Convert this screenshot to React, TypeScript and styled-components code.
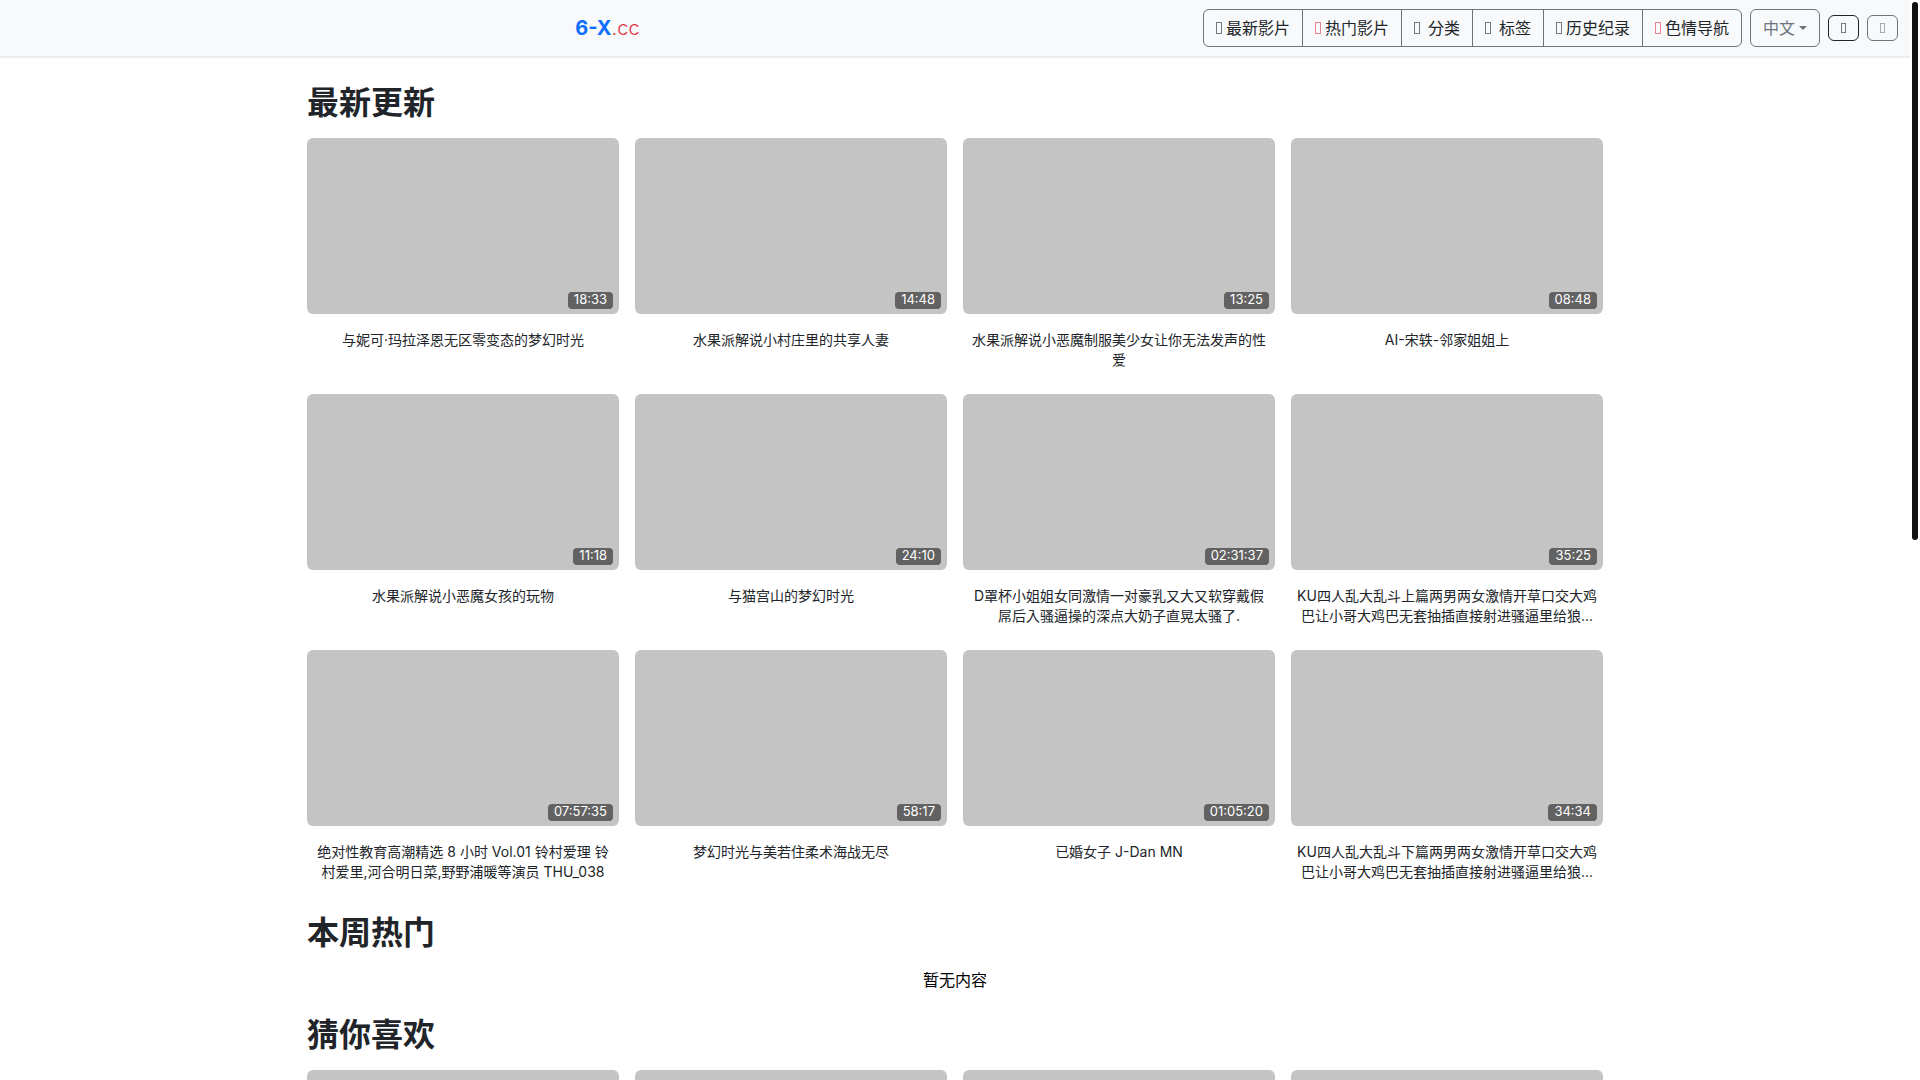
import React from 'react';
import styled, { createGlobalStyle } from 'styled-components';

const GlobalStyle = createGlobalStyle`
  *, *::before, *::after { box-sizing: border-box; }
  body {
    margin: 0;
    background: #fff;
    color: #212529;
    font-family: Inter, 'Noto Sans CJK JP', sans-serif;
    font-size: 16px;
    line-height: 24px;
  }
`;

const Shell = styled.div`
  display: grid;
  grid-template-columns: minmax(0, 1fr) 10px;
  height: 100vh;
`;

const Scroller = styled.div`
  overflow-y: auto;
  scrollbar-width: none;
`;

const Rail = styled.div`
  padding: 2px;
`;

const Thumb = styled.div`
  height: 50%;
  border-radius: 3px;
  background: #111;
`;

const Header = styled.header`
  display: flex;
  align-items: center;
  gap: 8px;
  padding: 9px 12px;
  background: #f8f9fa;
  border-bottom: 2px solid #ededed;
`;

const BrandArea = styled.div`
  flex: 1;
  margin-right: -8px;
  text-align: center;
`;

const Brand = styled.a`
  color: #dc3545;
  font-size: 20px;
  font-weight: 300;
  line-height: 30px;
  text-decoration: none;

  strong {
    color: #0d6efd;
    font-weight: 700;
  }
`;

const NavGroup = styled.nav`
  display: flex;
  border: 1px solid #6c757d;
  border-radius: 6px;
`;

const NavLink = styled.a<{ $wide?: boolean }>`
  display: flex;
  align-items: center;
  gap: ${(p) => (p.$wide ? 8 : 4)}px;
  padding: 6px 12px;
  color: #212529;
  text-decoration: none;
  white-space: nowrap;

  & + & {
    border-left: 1px solid #6c757d;
  }
`;

const LanguageBox = styled.label`
  display: flex;
  align-items: center;
  gap: 4px;
  padding: 6px 12px;
  border: 1px solid #6c757d;
  border-radius: 6px;
  color: #6c757d;
`;

const LanguageSelect = styled.select`
  appearance: none;
  width: 32px;
  padding: 0;
  border: 0;
  background: transparent;
  color: inherit;
  font: inherit;
`;

const IconButton = styled.button<{ $color: string }>`
  display: flex;
  align-items: center;
  justify-content: center;
  width: 31px;
  height: 26px;
  padding: 0;
  border: 1px solid ${(p) => p.$color};
  border-radius: 6px;
  background: transparent;
  color: ${(p) => p.$color};
`;

const Main = styled.main`
  display: flex;
  flex-direction: column;
  gap: 23px;
  max-width: 1320px;
  margin: 0 auto;
  padding: 25px 12px;
`;

const Heading = styled.h2`
  margin: 0 0 15px;
  font-size: 32px;
  font-weight: 700;
  line-height: 40px;
`;

const Grid = styled.div`
  display: grid;
  grid-template-columns: repeat(4, minmax(0, 1fr));
  gap: 16px;
`;

const Card = styled.a`
  display: block;
  color: inherit;
  text-decoration: none;
`;

const Poster = styled.div`
  position: relative;
  aspect-ratio: 39 / 22;
  border-radius: 6px;
  background: #c4c4c4;
`;

const Duration = styled.span`
  position: absolute;
  right: 6px;
  bottom: 5px;
  padding: 0 6px 2px;
  border-radius: 4px;
  background: rgba(0, 0, 0, 0.5);
  color: #fff;
  font-size: 13px;
  line-height: 15px;
`;

const Title = styled.div`
  display: -webkit-box;
  -webkit-box-orient: vertical;
  -webkit-line-clamp: 2;
  height: 40px;
  margin: 16px 4px 8px;
  overflow: hidden;
  font-size: 14px;
  line-height: 20px;
  text-align: center;
`;

const Empty = styled.p`
  margin: 0;
  color: #000;
  text-align: center;
`;

function Glyph({ color = '#212529', small = false }: { color?: string; small?: boolean }) {
  return (
    <svg width={small ? 5 : 6} height={small ? 10 : 12} aria-hidden="true">
      <rect
        x="0.5"
        y="0.5"
        width={small ? 4 : 5}
        height={small ? 9 : 11}
        fill="none"
        stroke={color}
        strokeOpacity="0.6"
      />
    </svg>
  );
}

const navItems = [
  { label: '最新影片' },
  { label: '热门影片', color: '#dc3545' },
  { label: '分类', wide: true },
  { label: '标签', wide: true },
  { label: '历史纪录' },
  { label: '色情导航', color: '#dc3545' },
];

const latest = [
  { time: '18:33', title: '与妮可·玛拉泽恩无区零变态的梦幻时光' },
  { time: '14:48', title: '水果派解说小村庄里的共享人妻' },
  { time: '13:25', title: '水果派解说小恶魔制服美少女让你无法发声的性爱' },
  { time: '08:48', title: 'AI-宋轶-邻家姐姐上' },
  { time: '11:18', title: '水果派解说小恶魔女孩的玩物' },
  { time: '24:10', title: '与猫宫山的梦幻时光' },
  { time: '02:31:37', title: 'D罩杯小姐姐女同激情一对豪乳又大又软穿戴假屌后入骚逼操的深点大奶子直晃太骚了.' },
  { time: '35:25', title: 'KU四人乱大乱斗上篇两男两女激情开草口交大鸡巴让小哥大鸡巴无套抽插直接射进骚逼里给狼...' },
  { time: '07:57:35', title: '绝对性教育高潮精选 8 小时 Vol.01 铃村爱理 铃村爱里,河合明日菜,野野浦暖等演员 THU_038' },
  { time: '58:17', title: '梦幻时光与美若住柔术海战无尽' },
  { time: '01:05:20', title: '已婚女子 J-Dan MN' },
  { time: '34:34', title: 'KU四人乱大乱斗下篇两男两女激情开草口交大鸡巴让小哥大鸡巴无套抽插直接射进骚逼里给狼...' },
];

export default function App() {
  return (
    <Shell>
      <GlobalStyle />
      <Scroller>
        <Header>
          <BrandArea>
            <Brand href="#">
              <strong>6-X</strong>.cc
            </Brand>
          </BrandArea>
          <NavGroup>
            {navItems.map((item) => (
              <NavLink key={item.label} href="#" $wide={item.wide}>
                <Glyph color={item.color} />
                {item.label}
              </NavLink>
            ))}
          </NavGroup>
          <LanguageBox>
            <LanguageSelect aria-label="中文">
              <option>中文</option>
            </LanguageSelect>
            <svg width="8" height="4" aria-hidden="true">
              <path d="M0 0h8L4 4z" fill="currentColor" />
            </svg>
          </LanguageBox>
          <IconButton type="button" $color="#212529">
            <Glyph small />
          </IconButton>
          <IconButton type="button" $color="#6c757d">
            <Glyph small color="#6c757d" />
          </IconButton>
        </Header>
        <Main>
          <section>
            <Heading>最新更新</Heading>
            <Grid>
              {latest.map((video) => (
                <Card key={video.title} href="#">
                  <Poster>
                    <Duration>{video.time}</Duration>
                  </Poster>
                  <Title>{video.title}</Title>
                </Card>
              ))}
            </Grid>
          </section>
          <section>
            <Heading>本周热门</Heading>
            <Empty>暂无内容</Empty>
          </section>
          <section>
            <Heading>猜你喜欢</Heading>
            <Grid>
              {[1, 2, 3, 4].map((slot) => (
                <Poster key={slot} />
              ))}
            </Grid>
          </section>
        </Main>
      </Scroller>
      <Rail>
        <Thumb />
      </Rail>
    </Shell>
  );
}
